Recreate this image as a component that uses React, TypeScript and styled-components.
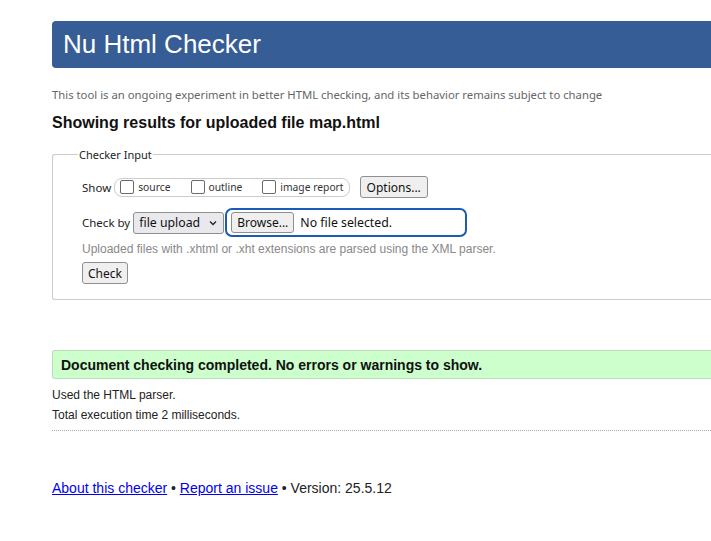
import styled, { createGlobalStyle } from "styled-components";

const GlobalStyle = createGlobalStyle`
  html, body {
    margin: 0;
    padding: 0;
    background: #ffffff;
    overflow: hidden;
  }
  body {
    font-family: "Liberation Sans", Arial, sans-serif;
    color: #222222;
  }
`;

const Page = styled.div`
  padding: 21px 0 0 52px;
`;

const Header = styled.h1`
  margin: 0;
  height: 47px;
  padding-left: 11px;
  display: flex;
  align-items: center;
  background: #365d95;
  border-radius: 4px 0 0 4px;
  color: #ffffff;
  font-size: 26px;
  font-weight: 400;
`;

const Tagline = styled.p`
  margin: 19px 0 0;
  font-family: "Noto Sans", "Open Sans", sans-serif;
  font-size: 11.3px;
  line-height: 16px;
  color: #666666;
`;

const Heading = styled.h2`
  margin: 10px 0 0;
  font-size: 16px;
  line-height: 20px;
  font-weight: 700;
  color: #111111;
`;

const Fieldset = styled.fieldset`
  margin: 14px 0 0;
  padding: 8px 0 14px 29px;
  height: 153px;
  box-sizing: border-box;
  border: 1px solid #cccccc;
  border-right: none;
  border-radius: 3px 0 0 3px;
`;

const Legend = styled.legend`
  margin-left: -4px;
  padding: 0 1px;
  font-family: "Noto Sans", "Open Sans", sans-serif;
  font-size: 11px;
  color: #222222;
`;

const Row = styled.div<{ $top: number }>`
  display: flex;
  align-items: center;
  margin-top: ${(p) => p.$top}px;
  font-family: "Noto Sans", "Open Sans", sans-serif;
  font-size: 11.5px;
  color: #222222;
`;

const Label = styled.span`
  margin-right: 3px;
`;

const CheckGroup = styled.div`
  display: flex;
  align-items: center;
  height: 17px;
  padding: 0 5px;
  border: 1px solid #cccccc;
  border-radius: 8px;
  font-size: 10.3px;
`;

const CheckItem = styled.label<{ $gap: number }>`
  display: flex;
  align-items: center;
  margin-right: ${(p) => p.$gap}px;
  color: #333333;
`;

const Box = styled.span`
  display: inline-block;
  width: 12px;
  height: 12px;
  margin-right: 4px;
  border: 1px solid #6a6a6a;
  border-radius: 2px;
  background: #ffffff;
`;

const Button = styled.button`
  height: 22px;
  padding: 0 6px;
  font-family: "Noto Sans", "Open Sans", sans-serif;
  font-size: 12px;
  color: #111111;
  background: #efefef;
  border: 1px solid #8f8f8f;
  border-radius: 3px;
`;

const OptionsButton = styled(Button)`
  margin-left: 10px;
`;

const Select = styled.div`
  display: flex;
  align-items: center;
  gap: 9px;
  height: 22px;
  box-sizing: border-box;
  padding: 0 6px 0 5px;
  background: #e9e9ed;
  border: 1px solid #8f8f8f;
  border-radius: 3px;
  font-size: 12.3px;
  color: #111111;
`;

const FileBox = styled.div`
  display: flex;
  align-items: center;
  width: 242px;
  height: 29px;
  box-sizing: border-box;
  margin-left: 1px;
  padding-left: 4px;
  border: 2px solid #1a5bb8;
  border-radius: 7px;
  font-size: 12.3px;
  color: #111111;
`;

const BrowseButton = styled(Button)`
  height: 21px;
  padding: 0 5px;
  margin-right: 6px;
  font-size: 12px;
`;

const Note = styled.p`
  margin: 5px 0 0;
  font-size: 12px;
  line-height: 14px;
  color: #888888;
`;

const CheckButton = styled(Button)`
  margin-top: 6px;
  height: 22px;
  padding: 0 5px;
`;

const Success = styled.div`
  margin-top: 50px;
  height: 29px;
  box-sizing: border-box;
  padding-left: 8px;
  display: flex;
  align-items: center;
  background: #ccffcc;
  border: 1px solid #bbddbb;
  border-right: none;
  border-radius: 3px 0 0 3px;
  font-size: 14px;
  font-weight: 700;
  color: #111111;
`;

const Detail = styled.p<{ $top: number }>`
  margin: ${(p) => p.$top}px 0 0;
  font-size: 12px;
  line-height: 14px;
  color: #222222;
`;

const Rule = styled.hr`
  margin: 8px 0 0;
  border: none;
  border-top: 1px dotted #aaaaaa;
`;

const Footer = styled.p`
  margin: 49px 0 0;
  font-size: 14px;
  line-height: 16px;
  color: #222222;

  a {
    color: #0000ee;
    text-decoration: underline;
  }
`;

const Chevron = () => (
  <svg width="8" height="6" viewBox="0 0 8 6">
    <path d="M1 1.5 L4 4.5 L7 1.5" fill="none" stroke="#222" strokeWidth="1.3" />
  </svg>
);

const checks = [
  { label: "source", gap: 20 },
  { label: "outline", gap: 20 },
  { label: "image report", gap: 0 },
];

const App = () => {
  return (
    <>
      <GlobalStyle />
      <Page>
        <Header>Nu Html Checker</Header>
        <Tagline>
          This tool is an ongoing experiment in better HTML checking, and its behavior remains subject to change
        </Tagline>
        <Heading>Showing results for uploaded file map.html</Heading>
        <Fieldset>
          <Legend>Checker Input</Legend>
          <Row $top={6}>
            <Label>Show</Label>
            <CheckGroup>
              {checks.map((c) => (
                <CheckItem key={c.label} $gap={c.gap}>
                  <Box />
                  {c.label}
                </CheckItem>
              ))}
            </CheckGroup>
            <OptionsButton>Options...</OptionsButton>
          </Row>
          <Row $top={10}>
            <Label>Check by</Label>
            <Select>
              file upload
              <Chevron />
            </Select>
            <FileBox>
              <BrowseButton>Browse...</BrowseButton>
              No file selected.
            </FileBox>
          </Row>
          <Note>Uploaded files with .xhtml or .xht extensions are parsed using the XML parser.</Note>
          <CheckButton>Check</CheckButton>
        </Fieldset>
        <Success>Document checking completed. No errors or warnings to show.</Success>
        <Detail $top={9}>Used the HTML parser.</Detail>
        <Detail $top={6}>Total execution time 2 milliseconds.</Detail>
        <Rule />
        <Footer>
          <a href="#about">About this checker</a> • <a href="#issue">Report an issue</a> • Version: 25.5.12
        </Footer>
      </Page>
    </>
  );
};

export default App;
